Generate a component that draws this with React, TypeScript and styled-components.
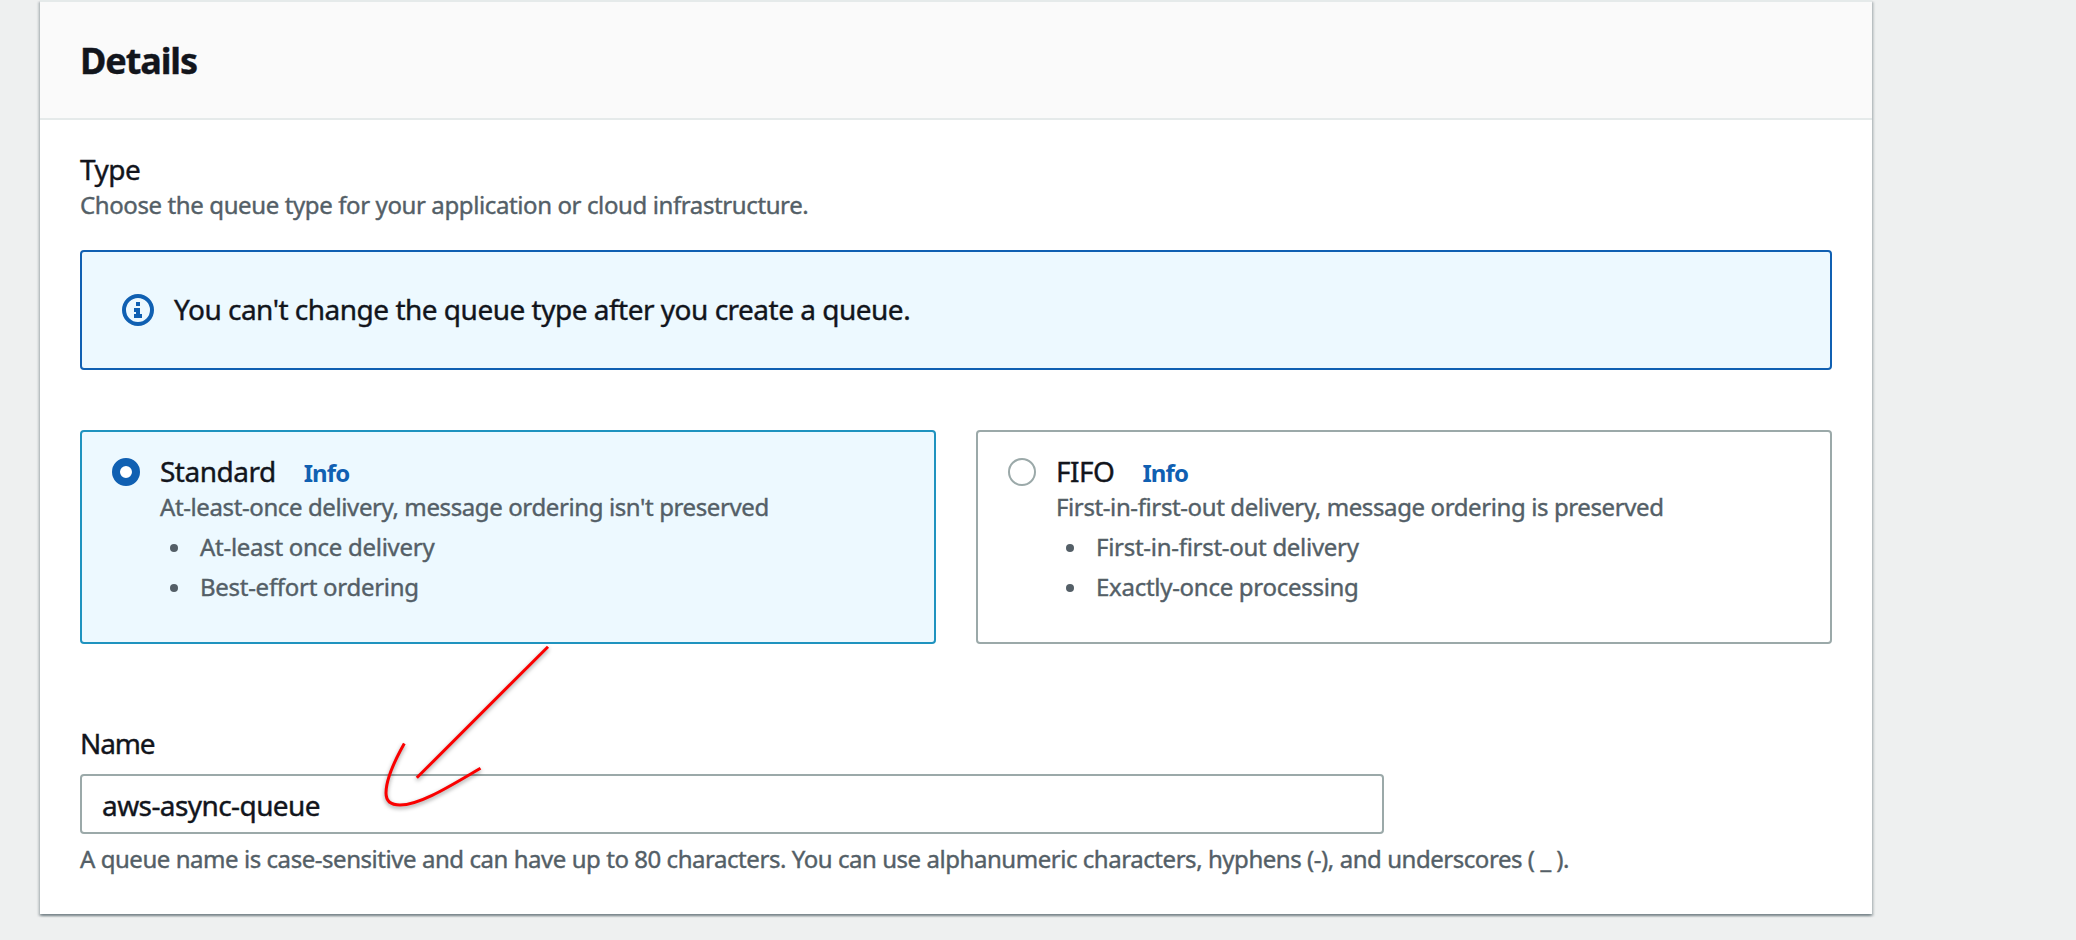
import React from 'react';
import styled, { createGlobalStyle } from 'styled-components';

const color = {
  page: '#eef0f0',
  divider: '#e5eaea',
  ink: '#12151c',
  muted: '#545f67',
  link: '#1060b2',
  control: '#9ba9a9',
  selected: '#1f93bf',
  tint: '#edf9ff',
};

const GlobalStyle = createGlobalStyle`
  * { box-sizing: border-box; }
  body {
    margin: 0;
    background: ${color.page};
    color: ${color.ink};
    font-family: "Noto Sans", "Open Sans", sans-serif;
    font-size: 28px;
    letter-spacing: -0.5px;
    -webkit-text-stroke: 0.4px currentColor;
  }
`;

const Page = styled.main`
  position: relative;
  height: 940px;
  padding: 0 204px 26px 40px;
  overflow: hidden;
`;

const Panel = styled.section`
  height: 914px;
  background: #fff;
  border-top: 2px solid ${color.divider};
  box-shadow:
    0 2px 2px 0 rgba(0, 28, 36, 0.3),
    2px 2px 2px 0 rgba(0, 28, 36, 0.15),
    -2px 2px 2px 0 rgba(0, 28, 36, 0.15);
`;

const PanelHeader = styled.header`
  display: flex;
  align-items: center;
  height: 118px;
  padding: 2px 40px 0;
  background: #fafafa;
  border-bottom: 2px solid ${color.divider};
`;

const Title = styled.h2`
  margin: 0;
  font-size: 36px;
  line-height: 44px;
  font-weight: 700;
  letter-spacing: -1.1px;
`;

const PanelBody = styled.div`
  padding: 29px 40px 0;
`;

const Label = styled.div`
  line-height: 40px;
  white-space: nowrap;
`;

const FieldLabel = styled.label`
  display: block;
  line-height: 40px;
  letter-spacing: -1.1px;
`;

const Hint = styled.div`
  font-size: 24px;
  line-height: 32px;
  letter-spacing: -0.39px;
  color: ${color.muted};
  white-space: nowrap;
`;

const Constraint = styled(Hint)`
  letter-spacing: -0.45px;
`;

const Alert = styled.div`
  display: flex;
  align-items: center;
  gap: 20px;
  height: 120px;
  margin: 29px 0 60px;
  padding: 0 40px;
  border: 2px solid ${color.link};
  border-radius: 4px;
  background: ${color.tint};
`;

const AlertText = styled(Label)`
  padding-bottom: 2px;
`;

const Tiles = styled.div`
  display: grid;
  grid-template-columns: 1fr 1fr;
  gap: 40px;
  margin-bottom: 79px;
`;

const Tile = styled.div<{ $selected: boolean }>`
  display: flex;
  gap: 20px;
  height: 214px;
  padding: 19px 30px;
  border: 2px solid ${(p) => (p.$selected ? color.selected : color.control)};
  border-radius: 4px;
  background: ${(p) => (p.$selected ? color.tint : '#fff')};
`;

const Radio = styled.span<{ $selected: boolean }>`
  flex: none;
  width: 28px;
  height: 28px;
  margin-top: 7px;
  border: ${(p) => (p.$selected ? `8px solid ${color.link}` : `2px solid ${color.control}`)};
  border-radius: 50%;
  background: #fff;
`;

const TileHeading = styled.div`
  display: flex;
  align-items: baseline;
  gap: 28px;
  height: 40px;
  line-height: 40px;
`;

const InfoLink = styled.a`
  font-size: 24px;
  font-weight: 700;
  letter-spacing: -0.9px;
  color: ${color.link};
  -webkit-text-stroke-width: 0;
`;

const Features = styled.ul`
  margin: 4px 0 0;
  padding: 0;
  list-style: none;
  font-size: 24px;
  line-height: 40px;
  letter-spacing: -0.28px;
  color: ${color.muted};
`;

const Feature = styled.li`
  display: flex;
  align-items: center;
  gap: 22px;
  padding-left: 10px;

  &::before {
    content: '';
    width: 8px;
    height: 8px;
    margin-top: 2px;
    border-radius: 50%;
    background: currentColor;
  }
`;

const NameInput = styled.input`
  display: block;
  width: 1304px;
  height: 60px;
  margin: 11px 0 9px;
  padding: 2px 20px 0;
  border: 2px solid ${color.control};
  border-radius: 4px;
  background: #fff;
  color: ${color.ink};
  font: inherit;
  letter-spacing: -0.58px;
  outline: none;
`;

const Annotation = styled.svg`
  position: absolute;
  left: 370px;
  top: 630px;
  pointer-events: none;
  filter: drop-shadow(0 2px 2px rgba(0, 0, 0, 0.4));
`;

function InfoIcon() {
  return (
    <svg width="32" height="32" viewBox="0 0 32 32" fill={color.link}>
      <circle cx="16" cy="16" r="14" fill="none" stroke={color.link} strokeWidth="4" />
      <path d="M14 8h4v4h-4zM12 14h6v6h2v4h-8v-4h2v-2h-2z" />
    </svg>
  );
}

type QueueType = { name: string; summary: string; features: string[]; selected: boolean };

const queueTypes: QueueType[] = [
  {
    name: 'Standard',
    summary: "At-least-once delivery, message ordering isn't preserved",
    features: ['At-least once delivery', 'Best-effort ordering'],
    selected: true,
  },
  {
    name: 'FIFO',
    summary: 'First-in-first-out delivery, message ordering is preserved',
    features: ['First-in-first-out delivery', 'Exactly-once processing'],
    selected: false,
  },
];

export default function App() {
  return (
    <Page>
      <GlobalStyle />
      <Panel>
        <PanelHeader>
          <Title>Details</Title>
        </PanelHeader>
        <PanelBody>
          <Label>Type</Label>
          <Hint>Choose the queue type for your application or cloud infrastructure.</Hint>
          <Alert>
            <InfoIcon />
            <AlertText>You can't change the queue type after you create a queue.</AlertText>
          </Alert>
          <Tiles>
            {queueTypes.map((type) => (
              <Tile key={type.name} $selected={type.selected}>
                <Radio $selected={type.selected} />
                <div>
                  <TileHeading>
                    <span>{type.name}</span>
                    <InfoLink>Info</InfoLink>
                  </TileHeading>
                  <Hint>{type.summary}</Hint>
                  <Features>
                    {type.features.map((feature) => (
                      <Feature key={feature}>{feature}</Feature>
                    ))}
                  </Features>
                </div>
              </Tile>
            ))}
          </Tiles>
          <FieldLabel htmlFor="queue-name">Name</FieldLabel>
          <NameInput id="queue-name" defaultValue="aws-async-queue" />
          <Constraint>
            A queue name is case-sensitive and can have up to 80 characters. You can use
            alphanumeric characters, hyphens (-), and underscores ( _ ).
          </Constraint>
        </PanelBody>
      </Panel>
      <Annotation width="200" height="190" viewBox="370 630 200 190" fill="none" stroke="#fa0000" strokeWidth="3">
        <path d="M548 646.7 416.8 777.8" />
        <path d="M404.3 743.5C395 760 386 779 386 793C386 803 393 805 400 805C420 805 450 786 480.5 768.2" />
      </Annotation>
    </Page>
  );
}
